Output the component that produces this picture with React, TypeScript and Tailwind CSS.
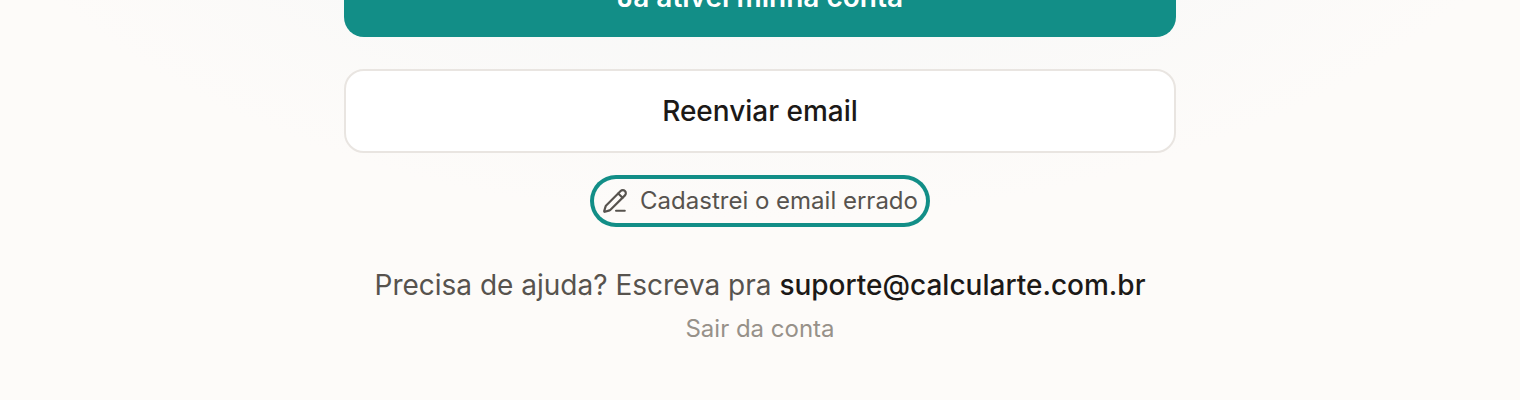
import { PencilLine } from "lucide-react";

const SUPPORT_EMAIL = "suporte@calcularte.com.br";

const App = () => {
  return (
    <main className="min-h-screen overflow-hidden bg-[#fdfbf9] bg-[radial-gradient(ellipse_840px_480px_at_50%_-260px,#f2f5f6,#fdfbf9)] font-['Inter',sans-serif] text-[#1c1917]">
      <div className="mx-auto -mt-[43px] flex w-full max-w-[832px] flex-col items-center">
        <button
          type="button"
          className="h-20 w-full rounded-[20px] bg-[#128e87] text-[28px] font-semibold text-white"
        >
          Já ativei minha conta
        </button>

        <button
          type="button"
          className="mt-8 h-21 w-full rounded-[20px] border-2 border-[#e9e5e1] bg-white text-[28px] font-medium"
        >
          Reenviar email
        </button>

        <button
          type="button"
          className="mt-[26px] flex h-11 items-center gap-3 rounded-full px-2 text-2xl text-[#57534e] ring-4 ring-[#128e87]"
        >
          <PencilLine size={26} strokeWidth={2} aria-hidden="true" />
          Cadastrei o email errado
        </button>

        <p className="mt-[42px] text-center text-[28px] leading-10 text-[#57534e]">
          Precisa de ajuda? Escreva pra{" "}
          <a
            href={`mailto:${SUPPORT_EMAIL}`}
            className="font-medium text-[#1c1917]"
          >
            {SUPPORT_EMAIL}
          </a>
        </p>

        <button type="button" className="mt-2 text-2xl text-[#979189]">
          Sair da conta
        </button>
      </div>
    </main>
  );
};

export default App;
